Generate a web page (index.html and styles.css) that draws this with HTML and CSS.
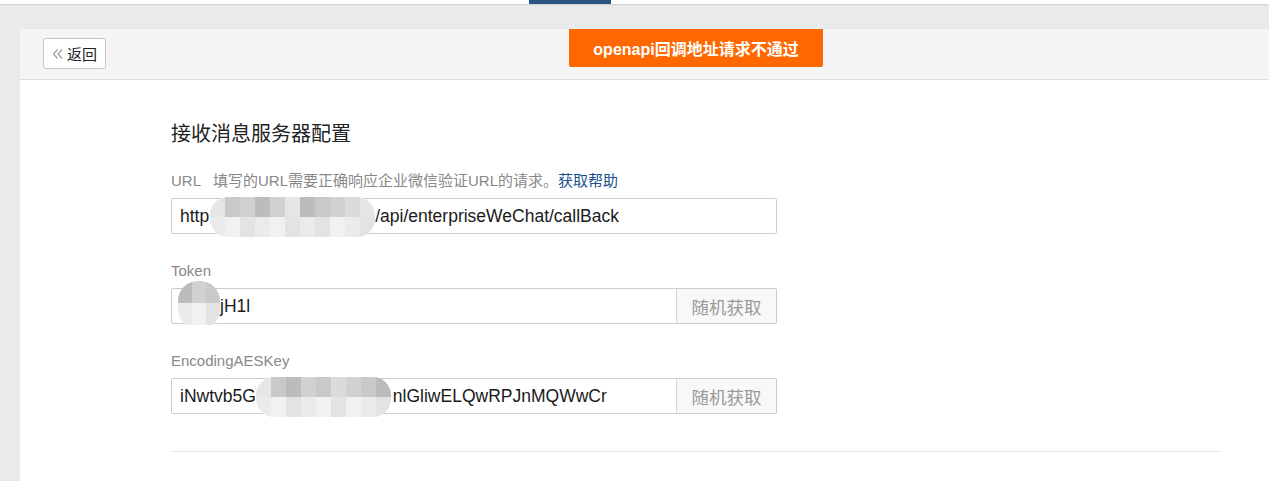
FILE: index.html
```html
<!DOCTYPE html>
<html lang="zh-CN">
<head>
<meta charset="utf-8">
<title>接收消息服务器配置</title>
<link rel="stylesheet" href="styles.css">
</head>
<body>
<div class="topbar"><span class="toptab"></span></div>
<main class="page">
  <section class="card">
    <header class="card-head">
      <button class="back-btn"><svg class="back-ico" width="12" height="12" viewBox="0 0 12 12" aria-hidden="true"><path d="M5.5 1.5 L1.5 6 L5.5 10.5 M10 1.5 L6 6 L10 10.5" fill="none" stroke="#9c9c9c" stroke-width="1.2"/></svg>返回</button>
    </header>
    <div class="toast">openapi回调地址请求不通过</div>
    <div class="card-body">
      <h2 class="title">接收消息服务器配置</h2>

      <div class="field">
        <div class="label"><span class="label-key">URL</span><span class="label-desc">填写的URL需要正确响应企业微信验证URL的请求。</span><a class="help" href="#">获取帮助</a></div>
        <div class="input-row">
          <div class="input"><span>http</span><span class="mosaic m-url"><i class="c1"></i><i class="c3"></i><i class="c2"></i><i class="c4"></i><i class="c2"></i><i class="c1"></i><i class="c4"></i><i class="c3"></i><i class="c2"></i><i class="c5"></i><i class="c1"></i><i class="l1"></i><i class="l2"></i><i class="l3"></i><i class="l1"></i><i class="l2"></i><i class="l3"></i><i class="l1"></i><i class="l3"></i><i class="l2"></i><i class="l1"></i><i class="l3"></i></span><span>/api/enterpriseWeChat/callBack</span></div>
        </div>
      </div>

      <div class="field">
        <div class="label">Token</div>
        <div class="input-row split">
          <div class="input"><span class="mosaic m-token"><i class="c4"></i><i class="c2"></i><i class="c3"></i><i class="l1"></i><i class="l2"></i><i class="l3"></i></span><span>jH1l</span></div>
          <button class="addon">随机获取</button>
        </div>
      </div>

      <div class="field">
        <div class="label">EncodingAESKey</div>
        <div class="input-row split">
          <div class="input"><span>iNwtvb5G</span><span class="mosaic m-aes"><i class="c1"></i><i class="c3"></i><i class="c4"></i><i class="c2"></i><i class="c3"></i><i class="c5"></i><i class="c2"></i><i class="c3"></i><i class="c4"></i><i class="l1"></i><i class="l2"></i><i class="l3"></i><i class="l1"></i><i class="l2"></i><i class="l3"></i><i class="l2"></i><i class="l1"></i><i class="l3"></i></span><span>nlGliwELQwRPJnMQWwCr</span></div>
          <button class="addon">随机获取</button>
        </div>
      </div>

      <hr class="divider">
    </div>
  </section>
</main>
</body>
</html>
```

FILE: styles.css
```css
* { box-sizing: border-box; }
html, body { margin: 0; padding: 0; }
body {
  background: #e9eaec;
  font-family: "Liberation Sans", "Noto Sans CJK SC", sans-serif;
  color: #222;
  overflow: hidden;
  height: 481px;
}
.topbar {
  position: relative;
  height: 4px;
  background: #fff;
  box-shadow: 0 1px 2px rgba(0,0,0,0.12);
}
.toptab {
  position: absolute;
  left: 529px;
  top: 0;
  width: 82px;
  height: 4px;
  background: #2c5483;
}
.page {
  padding: 25px 0 0 20px;
}
.card {
  position: relative;
  background: #fff;
  border-radius: 3px 0 0 0;
  margin-right: -20px;
  min-height: 460px;
}
.card-head {
  height: 51px;
  background: #f5f5f5;
  border-bottom: 1px solid #e0e0e0;
  border-radius: 3px 0 0 0;
  padding: 9px 0 0 23px;
}
.back-btn {
  display: flex;
  align-items: center;
  height: 31px;
  width: 63px;
  padding: 0 0 0 8px;
  background: #fff;
  border: 1px solid #c6c6c6;
  border-radius: 3px;
  font-family: "Noto Sans CJK SC", sans-serif;
  font-size: 15px;
  color: #222;
}
.back-ico {
  margin-right: 3px;
  flex: none;
}
.toast {
  position: absolute;
  left: 549px;
  top: 0;
  width: 254px;
  height: 38px;
  background: #ff6700;
  color: #fff;
  font-size: 16px;
  font-weight: bold;
  display: flex;
  align-items: center;
  justify-content: center;
  border-radius: 0 0 2px 2px;
  font-family: "Liberation Sans", "Noto Sans CJK SC", sans-serif;
}
.card-body {
  padding: 41px 0 0 151px;
  width: 1201px;
}
.title {
  margin: 0;
  font-size: 20px;
  line-height: 24px;
  font-weight: normal;
  color: #222;
  font-family: "Noto Sans CJK SC", sans-serif;
}
.field { margin-top: 27px; }
.field + .field { margin-top: 28px; }
.label {
  font-size: 15px;
  line-height: 18px;
  color: #888;
  display: flex;
  align-items: center;
}
.label-key { margin-right: 12px; }
.help {
  color: #1b4f8f;
  text-decoration: none;
}
.input-row {
  margin-top: 8px;
  display: flex;
  width: 606px;
  height: 36px;
}
.input {
  flex: 1;
  display: flex;
  align-items: center;
  height: 36px;
  padding: 0 8px;
  border: 1px solid #c9cdd2;
  border-radius: 2px;
  font-size: 17.5px;
  color: #1a1a1a;
  white-space: nowrap;
  overflow: visible;
}
.split .input { border-radius: 2px 0 0 2px; }
.addon {
  width: 101px;
  height: 36px;
  border: 1px solid #c5ccd4;
  border-left: 1px solid #d4d8dc;
  margin-left: -1px;
  border-radius: 0 2px 2px 0;
  background: #f8f8f8;
  color: #9a9a9a;
  font-size: 17.5px;
  font-family: "Noto Sans CJK SC", sans-serif;
  padding: 0;
}
.mosaic {
  display: grid;
  grid-auto-flow: row;
  align-self: stretch;
  margin: -2px 0 -4px;
  border-radius: 18px;
  overflow: hidden;
}
.mosaic i { display: block; }
.m-url { grid-template-columns: repeat(11, 15px); grid-template-rows: 20px 22px; width: 165px; margin-left: 1px; }
.m-token { grid-template-columns: repeat(3, 14px); grid-template-rows: 22px 22px; width: 42px; margin: -8px 0 -6px -2px; border-radius: 20px; }
.m-aes { grid-template-columns: repeat(9, 15px); grid-template-rows: 20px 22px; width: 135px; margin-right: 2px; }
.c1 { background: #e6e6e6; }
.c2 { background: #d1d1d1; }
.c3 { background: #c9c9c9; }
.c4 { background: #bdbbbc; }
.c5 { background: #dadbdc; }
.l1 { background: #ebebeb; }
.l2 { background: #f1f1f1; }
.l3 { background: #e3e3e3; }
.divider {
  margin: 37px 0 0;
  border: 0;
  border-top: 1px solid #e5e5e5;
  width: 1050px;
}
```
